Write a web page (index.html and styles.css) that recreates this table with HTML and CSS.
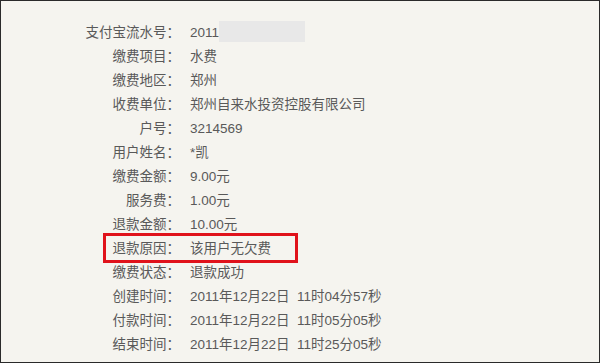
FILE: index.html
```html
<!DOCTYPE html>
<html lang="zh-CN">
<head>
<meta charset="utf-8">
<link rel="stylesheet" href="styles.css">
</head>
<body>
<div class="frame">
  <div class="list">
    <div class="row"><span class="label">支付宝流水号：</span><span class="value">2011<span class="mask"></span></span></div>
    <div class="row"><span class="label">缴费项目：</span><span class="value">水费</span></div>
    <div class="row"><span class="label">缴费地区：</span><span class="value">郑州</span></div>
    <div class="row"><span class="label">收费单位：</span><span class="value">郑州自来水投资控股有限公司</span></div>
    <div class="row"><span class="label">户号：</span><span class="value">3214569</span></div>
    <div class="row"><span class="label">用户姓名：</span><span class="value">*凯</span></div>
    <div class="row"><span class="label">缴费金额：</span><span class="value">9.00元</span></div>
    <div class="row"><span class="label">服务费：</span><span class="value">1.00元</span></div>
    <div class="row"><span class="label">退款金额：</span><span class="value">10.00元</span></div>
    <div class="row highlight"><span class="label">退款原因：</span><span class="value">该用户无欠费</span></div>
    <div class="row"><span class="label">缴费状态：</span><span class="value">退款成功</span></div>
    <div class="row"><span class="label">创建时间：</span><span class="value">2011年12月22日&nbsp; 11时04分57秒</span></div>
    <div class="row"><span class="label">付款时间：</span><span class="value">2011年12月22日&nbsp; 11时05分05秒</span></div>
    <div class="row"><span class="label">结束时间：</span><span class="value">2011年12月22日&nbsp; 11时25分05秒</span></div>
  </div>
</div>
</body>
</html>
```
FILE: styles.css
```css
html, body {
  margin: 0;
  padding: 0;
  background: #f5f4ef;
}
.frame {
  box-sizing: border-box;
  width: 600px;
  height: 363px;
  border: 1px solid #2a2a2a;
  background: #f5f4ef;
  padding-top: 20px;
  font-family: "Liberation Sans", "Noto Sans CJK SC", sans-serif;
  font-size: 13.5px;
  color: #595959;
}
.list {
  display: flex;
  flex-direction: column;
}
.row {
  position: relative;
  display: grid;
  grid-template-columns: 179px 1fr;
  column-gap: 10px;
  height: 24px;
  line-height: 24px;
  white-space: nowrap;
}
.label {
  text-align: right;
}
.mask {
  display: inline-block;
  width: 86px;
  height: 21px;
  background: #e8e8e8;
  vertical-align: -5px;
}
.highlight::after {
  content: "";
  position: absolute;
  left: 102px;
  top: -4px;
  width: 195px;
  height: 30px;
  box-sizing: border-box;
  border: 3px solid #e0121b;
}
```
